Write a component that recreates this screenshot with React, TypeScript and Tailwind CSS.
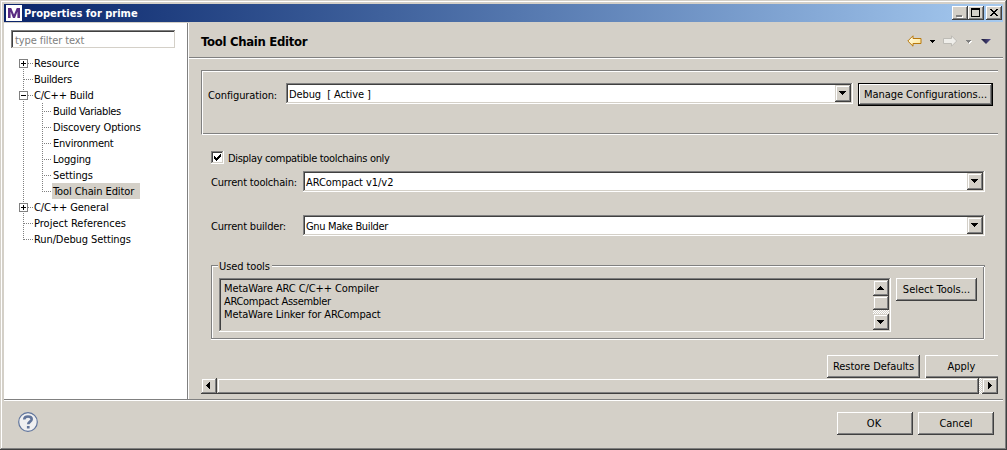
import React from 'react';

const raised =
  'bg-[#d4d0c8] shadow-[inset_-1px_-1px_0_#404040,inset_1px_1px_0_#ffffff,inset_-2px_-2px_0_#808080]';
const raisedThin =
  'bg-[#d4d0c8] shadow-[inset_-1px_-1px_0_#404040,inset_1px_1px_0_#d4d0c8,inset_-2px_-2px_0_#808080,inset_2px_2px_0_#ffffff]';
const sunken =
  'shadow-[inset_-1px_-1px_0_#ffffff,inset_1px_1px_0_#808080,inset_-2px_-2px_0_#d4d0c8,inset_2px_2px_0_#404040]';
const checker =
  'bg-[repeating-conic-gradient(#ffffff_0_25%,#d4d0c8_0_50%)] bg-[length:2px_2px]';

type Dir = 'up' | 'down' | 'left' | 'right';

function Arrow({ dir }: { dir: Dir }) {
  const paths: Record<Dir, string> = {
    down: 'M0 1h7v1H0zM1 2h5v1H1zM2 3h3v1H2zM3 4h1v1H3z',
    up: 'M3 1h1v1H3zM2 2h3v1H2zM1 3h5v1H1zM0 4h7v1H0z',
    left: 'M4 0h1v7H4zM3 1h1v5H3zM2 2h1v3H2zM1 3h1v1H1z',
    right: 'M2 0h1v7H2zM3 1h1v5H3zM4 2h1v3H4zM5 3h1v1H5z',
  };
  return (
    <svg width="7" height="7" viewBox="0 0 7 7" shapeRendering="crispEdges" className="shrink-0">
      <path d={paths[dir]} />
    </svg>
  );
}

function ScrollButton({ dir, className }: { dir: Dir; className: string }) {
  return (
    <div className={`flex shrink-0 items-start justify-start pl-1 ${raisedThin} ${className}`}>
      <Arrow dir={dir} />
    </div>
  );
}

function Button({ label, className }: { label: string; className: string }) {
  return (
    <button className={`flex h-[23px] shrink-0 items-center justify-center whitespace-nowrap pb-px ${raised} ${className}`}>
      {label}
    </button>
  );
}

function Combo({ className, children }: { className: string; children: React.ReactNode }) {
  return (
    <div className={`flex h-[21px] shrink-0 items-center bg-white p-[2px] ${sunken} ${className}`}>
      <span className="flex-1 whitespace-pre pl-px pt-[2px]">{children}</span>
      <ScrollButton dir="down" className="h-[17px] w-4 pt-[5px]" />
    </div>
  );
}

type Item = { label: string; child?: boolean; box?: 'plus' | 'minus'; selected?: boolean; spacing: string };

const items: Item[] = [
  { label: 'Resource', box: 'plus', spacing: 'tracking-[0px]' },
  { label: 'Builders', spacing: 'tracking-[-0.3px]' },
  { label: 'C/C++ Build', box: 'minus', spacing: 'tracking-[-0.2px]' },
  { label: 'Build Variables', child: true, spacing: 'tracking-[-0.35px]' },
  { label: 'Discovery Options', child: true, spacing: 'tracking-[-0.15px]' },
  { label: 'Environment', child: true, spacing: 'tracking-[-0.25px]' },
  { label: 'Logging', child: true, spacing: 'tracking-[-0.2px]' },
  { label: 'Settings', child: true, spacing: 'tracking-[-0.1px]' },
  { label: 'Tool Chain Editor', child: true, selected: true, spacing: 'tracking-[-0.1px]' },
  { label: 'C/C++ General', box: 'plus', spacing: 'tracking-[-0.1px]' },
  { label: 'Project References', spacing: 'tracking-[0px]' },
  { label: 'Run/Debug Settings', spacing: 'tracking-[-0.1px]' },
];

function TreeRow({ item, first, last, lastChild }: { item: Item; first: boolean; last: boolean; lastChild: boolean }) {
  const dots = { stroke: '#808080', strokeDasharray: '1 1', strokeWidth: 1 };
  return (
    <div className="flex h-4 items-center">
      <svg width={item.child ? 48 : 29} height="16" shapeRendering="crispEdges" className="shrink-0">
        <path d={`M19.5 ${first ? 8 : 0}V${last ? 9 : 16}`} {...dots} />
        {item.child ? (
          <>
            <path d={`M38.5 0V${lastChild ? 9 : 16}`} {...dots} />
            <path d="M38 8.5H48" {...dots} />
          </>
        ) : (
          <path d="M20 8.5H29" {...dots} />
        )}
        {item.box && (
          <>
            <rect x="15.5" y="4.5" width="8" height="8" fill="#fff" stroke="#808080" />
            <path d={item.box === 'plus' ? 'M17 8.5h5M19.5 6v5' : 'M17 8.5h5'} stroke="#000" />
          </>
        )}
      </svg>
      <span
        className={`flex h-4 items-center whitespace-nowrap pl-px pt-px ${item.spacing} ${
          item.selected ? 'w-[88px] bg-[#d4d0c8]' : ''
        }`}
      >
        {item.label}
      </span>
    </div>
  );
}

function Sidebar() {
  return (
    <aside className="w-[183px] shrink-0 bg-white pt-[7px]">
      <div className={`ml-[7px] flex h-[19px] w-[165px] items-center bg-white pl-1 pt-[2px] text-[#808080] ${sunken}`}>
        <span className="tracking-[-0.1px]">type filter text</span>
      </div>
      <nav className="mt-[6px]">
        {items.map((item, i) => (
          <TreeRow key={item.label} item={item} first={i === 0} last={i === items.length - 1} lastChild={i === 8} />
        ))}
      </nav>
    </aside>
  );
}

function TitleBar() {
  return (
    <div className="flex h-[18px] shrink-0 items-center bg-linear-to-r from-[#0a246a] to-[#a6caf0] pl-[2px] pr-px">
      <svg width="16" height="16" viewBox="0 0 16 16" className="shrink-0">
        <path d="M0 0h16v16H0z" fill="#fff" />
        <path d="M2 13V3h3.2L8 9.5 10.8 3H14v10h-2.600V6.800L9 13H7L4.600 6.800V13z" fill="#5b2c83" />
      </svg>
      <span className="flex-1 whitespace-nowrap pl-[2px] pt-px text-[11px] font-bold text-white">
        Properties for prime
      </span>
      <div className={`h-[14px] w-4 ${raised}`}>
        <svg width="16" height="14" shapeRendering="crispEdges">
          <path d="M5 10h6v2H5z" fill="#fff" />
          <path d="M4 9h6v2H4z" fill="#808080" />
        </svg>
      </div>
      <div className={`h-[14px] w-4 ${raised}`}>
        <svg width="16" height="14" shapeRendering="crispEdges">
          <path d="M3 2h9v9H3zM4 4v6h7V4z" fillRule="evenodd" />
        </svg>
      </div>
      <div className={`ml-[2px] h-[14px] w-4 ${raised}`}>
        <svg width="16" height="14" shapeRendering="crispEdges">
          <path d="M4 3h2v1H4zM10 3h2v1h-2zM5 4h2v1H5zM9 4h2v1H9zM6 5h4v1H6zM7 6h2v1H7zM6 7h4v1H6zM5 8h2v1H5zM9 8h2v1H9zM4 9h2v1H4zM10 9h2v1h-2z" />
        </svg>
      </div>
    </div>
  );
}

function Header() {
  return (
    <header className="flex h-[36px] shrink-0 items-center border-b border-white shadow-[inset_0_-1px_0_#808080] pl-[12px] pr-[10px]">
      <h1 className="flex-1 whitespace-nowrap pt-px text-[13px] font-bold tracking-[-0.3px]">Tool Chain Editor</h1>
      <svg width="86" height="14" viewBox="0 0 86 14" className="shrink-0">
        <defs>
          <linearGradient id="back" x1="0" y1="0" x2="1" y2="1">
            <stop offset="0" stopColor="#fffdf0" />
            <stop offset="1" stopColor="#ffe48c" />
          </linearGradient>
          <linearGradient id="menu" x1="0" y1="0" x2="1" y2="0">
            <stop offset="0" stopColor="#15142e" />
            <stop offset="1" stopColor="#5a5496" />
          </linearGradient>
        </defs>
        <path d="M.8 7L6 1.800V4.500H14V9.500H6V12.200z" fill="url(#back)" stroke="#b8780c" />
        <path d="M23 6h5v1h-5zM24 7h3v1h-3zM25 8h1v1h-1z" shapeRendering="crispEdges" />
        <path d="M49.700 7L44.500 1.800V4.500H36.500V9.500H44.500V12.200z" fill="#efeeea" stroke="#bdbbb5" />
        <path d="M60 7h5v1h-5zM61 8h3v1h-3zM62 9h1v1h-1z" fill="#fff" shapeRendering="crispEdges" />
        <path d="M59 6h5v1h-5zM60 7h3v1h-3zM61 8h1v1h-1z" fill="#808080" shapeRendering="crispEdges" />
        <path d="M74 5h10l-5 5z" fill="url(#menu)" />
      </svg>
    </header>
  );
}

function ToolsGroup() {
  return (
    <section className="ml-[22px] mt-[23px] flex h-[81px] w-[774px] flex-col">
      <div className="flex h-[13px] items-center">
        <div className="mt-px h-[2px] w-[7px] border-t border-l border-[#808080] bg-white" />
        <span className="w-[54px] whitespace-nowrap pl-px pt-[2px] tracking-[-0.1px]">Used tools</span>
        <div className="mt-px h-[2px] flex-1 border-t border-r border-[#808080] bg-white" />
      </div>
      <div className="-mt-[5px] mr-px flex h-[72px] border-x border-b border-[#808080] pl-[7px] pt-[11px] shadow-[inset_1px_0_0_#fff,1px_0_0_#fff,0_1px_0_#fff]">
        <div className={`flex h-[54px] w-[672px] p-[2px] ${sunken}`}>
          <ul className="flex-1 pl-[3px] pt-[2px] leading-[13px]">
            <li className="tracking-[-0.1px]">MetaWare ARC C/C++ Compiler</li>
            <li className="tracking-[-0.3px]">ARCompact Assembler</li>
            <li className="tracking-[-0.12px]">MetaWare Linker for ARCompact</li>
          </ul>
          <div className={`flex w-4 flex-col ${checker}`}>
            <ScrollButton dir="up" className="h-4 w-4 pt-[5px]" />
            <div className={`h-[14px] ${raisedThin}`} />
            <div className="h-1" />
            <ScrollButton dir="down" className="h-4 w-4 pt-[5px]" />
          </div>
        </div>
        <Button label="Select Tools..." className="ml-[5px] w-[81px]" />
      </div>
    </section>
  );
}

function Editor() {
  return (
    <main className="flex min-w-0 flex-1 flex-col">
      <Header />
      <section className="ml-[12px] mr-[5px] mt-[11px] h-[65px] border-t border-b border-l border-t-[#808080] border-b-white border-l-[#808080] shadow-[inset_1px_1px_0_#fff,inset_0_-1px_0_#808080]">
        <div className="flex pl-[6px] pt-[12px]">
          <label className="w-[78px] pt-[6px] leading-[14px] tracking-[-0.1px]">Configuration:</label>
          <Combo className="w-[567px] tracking-[-0.1px]">Debug  [ Active ]</Combo>
          <button
            className={`ml-[5px] h-[23px] w-[135px] whitespace-nowrap border border-black pb-px tracking-[-0.05px] ${raised}`}
          >
            Manage Configurations...
          </button>
        </div>
      </section>
      <div className="ml-[22px] mt-4 flex h-[13px] items-center">
        <span className={`flex size-[13px] items-center justify-center bg-white ${sunken}`}>
          <svg width="7" height="7" shapeRendering="crispEdges">
            <path d="M0 2h1v3H0zM1 3h1v3H1zM2 4h1v3H2zM3 3h1v3H3zM4 2h1v3H4zM5 1h1v3H5zM6 0h1v3H6z" />
          </svg>
        </span>
        <span className="pl-[4px] pt-[2px] tracking-[-0.33px]">Display compatible toolchains only</span>
      </div>
      <div className="ml-[22px] mt-[7px] flex items-center">
        <label className="w-[92px] pt-[2px] tracking-[-0.18px]">Current toolchain:</label>
        <Combo className="w-[682px] tracking-[-0.05px]">ARCompact v1/v2</Combo>
      </div>
      <div className="ml-[22px] mt-[23px] flex items-center">
        <label className="w-[92px] pt-[2px] tracking-[-0.18px]">Current builder:</label>
        <Combo className="w-[682px] tracking-[-0.35px]">Gnu Make Builder</Combo>
      </div>
      <ToolsGroup />
      <div className="ml-[12px] mr-[5px] mt-[15px] flex h-[23px] justify-end">
        <Button label="Restore Defaults" className="w-[93px] tracking-[-0.05px]" />
        <button className="ml-[5px] h-[23px] w-[73px] whitespace-nowrap pb-px shadow-[inset_1px_1px_0_#fff,inset_0_-1px_0_#404040,inset_0_-2px_0_#808080]">
          Apply
        </button>
      </div>
      <div className={`ml-[12px] mr-[5px] flex h-4 ${checker}`}>
        <ScrollButton dir="left" className="h-4 w-4 pt-1" />
        <div className={`h-4 w-[762px] ${raisedThin}`} />
        <div className="flex-1" />
        <ScrollButton dir="right" className="h-4 w-4 pt-1" />
      </div>
    </main>
  );
}

export default function App() {
  return (
    <div className="flex h-[450px] w-[1007px] flex-col bg-[#d4d0c8] p-1 font-['DejaVu_Sans_Condensed','DejaVu_Sans',sans-serif] text-[11px] leading-[13px] text-black [font-stretch:condensed] shadow-[inset_-1px_-1px_0_#404040,inset_1px_1px_0_#d4d0c8,inset_-2px_-2px_0_#808080,inset_2px_2px_0_#ffffff]">
      <TitleBar />
      <div className="mt-px flex h-[376px] shrink-0">
        <Sidebar />
        <div className="w-[2px] shrink-0 border-l border-[#808080] bg-white" />
        <Editor />
      </div>
      <div className="h-[2px] shrink-0 border-t border-[#808080] bg-white" />
      <footer className="flex flex-1 items-start pl-[14px] pr-[9px] pt-[11px]">
        <svg width="20" height="20" viewBox="0 0 20 20" className="shrink-0">
          <circle cx="10" cy="10" r="9.300" fill="#f0f0f1" stroke="#60759d" strokeWidth="1.200" />
          <path d="M6.200 7.500C6.300 5.300 8 4.500 10 4.500s3.700 1 3.700 2.800C13.700 9.600 10.300 9.600 10.200 12.300" fill="none" stroke="#62759a" strokeWidth="2.600" />
          <path d="M8.900 14h2.700v2.500H8.900z" fill="#62759a" />
        </svg>
        <div className="flex-1" />
        <Button label="OK" className="w-[76px] pr-[2px]" />
        <Button label="Cancel" className="ml-[5px] w-[76px] tracking-[-0.1px]" />
      </footer>
    </div>
  );
}
